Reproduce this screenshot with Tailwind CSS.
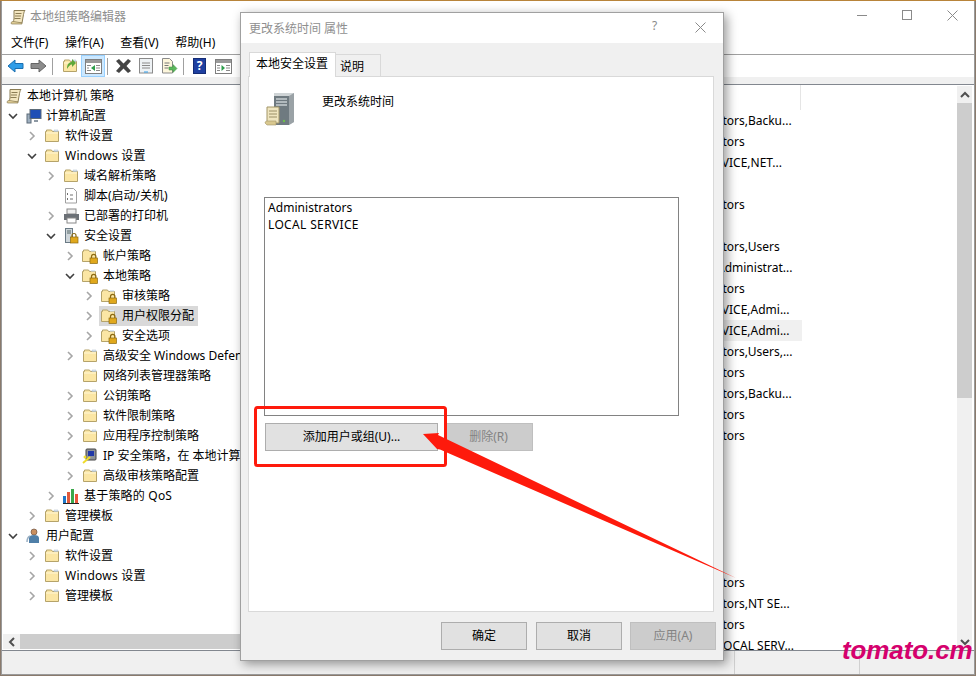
<!DOCTYPE html>
<html>
<head>
<meta charset="utf-8">
<script src="https://cdn.jsdelivr.net/npm/@tailwindcss/browser@4"></script>
</head>
<body class="w-[976px] h-[676px] overflow-hidden relative bg-[#8a7a6c] font-['Noto_Sans','Noto_Sans_CJK_SC',sans-serif] text-[12px] text-black">
<svg width="0" height="0" class="absolute">
  <defs>
    <symbol id="open" viewBox="0 0 12 12"><path d="M4 2l4 4-4 4" fill="none" stroke="#a6a6a6" stroke-width="1.6"/></symbol>
    <symbol id="down" viewBox="0 0 12 12"><path d="M2 4l4 4 4-4" fill="none" stroke="#404040" stroke-width="1.6"/></symbol>
    <symbol id="folder" viewBox="0 0 16 16"><path d="M1.500 13.500V3.500h1V2h5l1 1.500h6v10z" fill="#fbe6a4" stroke="#b5a36a"/><path d="M2 5h12" stroke="#fff6d6"/><path d="M10 2h4v1.500h-4z" fill="#dce9f5" stroke="#a8b8c8" stroke-width=".5"/></symbol>
    <symbol id="lockfolder" viewBox="0 0 16 16"><path d="M.5 13.500V3.500h1V2h5l1 1.500h6v10z" fill="#fbe6a4" stroke="#b5a36a"/><path d="M9 2h4v1.500H9z" fill="#dce9f5"/><path d="M9.500 10V8.500a2.200 2.200 0 0 1 4.400 0V10" fill="none" stroke="#8c6a12" stroke-width="1.200"/><rect x="8" y="10" width="7.500" height="5.500" fill="#e0a81c" stroke="#8c6a12" stroke-width=".7"/></symbol>
    <symbol id="scroll" viewBox="0 0 16 16"><path d="M4 1.500h11c-1 1-1 2-1.500 4L12 14H2c1-.5 1.500-1.500 2-4z" fill="#f3e6c0" stroke="#8b7d55"/><path d="M5.500 4.500h6M5 7h6M4.500 9.500h6" stroke="#8b7d55"/><path d="M1 14.500c0-2 1.500-2 3-2l8 1.500v1H2z" fill="#e2cf98" stroke="#8b7d55" stroke-width=".7"/></symbol>
  </defs>
</svg>
<div class="absolute left-0 right-0 top-0 h-px bg-[#b8843a]"></div>

<!-- main window -->
<div class="absolute left-px top-px w-[974px] h-[674px] bg-white border-x border-b border-[#9a9a9a] flex flex-col overflow-hidden">
  <div class="h-[31px] flex items-center relative shrink-0">
    <svg class="ml-[8px] w-4 h-4"><use href="#scroll"/></svg>
    <span class="ml-[4px] text-[#8f8f8f]">本地组策略编辑器</span>
    <svg class="absolute left-[855px] top-[14px]" width="11" height="2"><path d="M0 .5h10" stroke="#8a8a8a"/></svg>
    <div class="absolute left-[900px] top-[9px] w-[10px] h-[10px] border border-[#8a8a8a]"></div>
    <svg class="absolute left-[945px] top-[9px]" width="11" height="11"><path d="M.5.500l10 10M10.500.500l-10 10" stroke="#8a8a8a"/></svg>
  </div>
  <div class="h-[22px] flex items-center gap-[16.5px] pl-[9px] shrink-0 border-b border-[#a0a0a0] box-content">
    <span>文件(F)</span><span>操作(A)</span><span>查看(V)</span><span>帮助(H)</span>
  </div>
  <div class="h-[22px] flex items-center relative shrink-0">
    <svg class="absolute left-[5px] top-[3px]" width="17" height="16" viewBox="0 0 17 16"><path d="M1 8l7-6v3.500h8v5H8V14z" fill="#2f9de8" stroke="#1b6fb0"/></svg>
    <svg class="absolute left-[28px] top-[3px]" width="17" height="16" viewBox="0 0 17 16"><path d="M16 8L9 2v3.500H1v5h8V14z" fill="#8c8c8c" stroke="#666"/></svg>
    <div class="absolute left-[50px] top-[3px] w-px h-[17px] bg-[#a0a0a0]"></div>
    <svg class="absolute left-[60px] top-[3px] w-4 h-4"><use href="#folder"/></svg>
    <svg class="absolute left-[62px] top-[2px]" width="14" height="13" viewBox="0 0 14 13"><path d="M3 12c0-5 2-7 5-7V2l4 4-4 4V7.500c-2 0-3 1.500-5 4.500z" fill="#5fa83a"/></svg>
    <div class="absolute left-[79px] top-0 w-[24px] h-[22px] bg-[#cce8ff] border border-[#99d1ff]"></div>
    <svg class="absolute left-[83px] top-[4px]" width="17" height="15" viewBox="0 0 17 15"><rect x=".5" y=".5" width="16" height="14" fill="#fff" stroke="#7f7f7f"/><path d="M1 1h15v3H1z" fill="#9a9a9a"/><path d="M11 6.500h4M11 9h4M11 11.500h4M2 6.500h4M2 9h2M2 11.500h4" stroke="#8a8a8a"/><path d="M10 6v6L6 9z" fill="#2e9e4c"/></svg>
    <div class="absolute left-[105px] top-[3px] w-px h-[17px] bg-[#a0a0a0]"></div>
    <svg class="absolute left-[113px] top-[3px]" width="17" height="16" viewBox="0 0 17 16"><path d="M1 3l3-2 4.500 4.500L13 1l3 2-4.500 5 4.500 5-3 2-4.500-4.500L4 15l-3-2 4.500-5z" fill="#444"/></svg>
    <svg class="absolute left-[136px] top-[3px]" width="16" height="16" viewBox="0 0 16 16"><rect x="1.500" y=".5" width="13" height="14.500" fill="#eef2f5" stroke="#8a8a8a"/><path d="M4 5h8M4 7.500h8M4 10h8" stroke="#8a8a8a"/><path d="M6 14h4" stroke="#2f9de8"/></svg>
    <svg class="absolute left-[159px] top-[3px]" width="17" height="16" viewBox="0 0 17 16"><path d="M1.500.5h7l3 3V15h-10z" fill="#fdf6dc" stroke="#8a8a8a"/><path d="M3.500 5h5M3.500 7.500h4M3.500 10h4" stroke="#777"/><path d="M8 9h4V6.500l4 4-4 4V12H8z" fill="#5cb85c" stroke="#3f8f3f" stroke-width=".5"/></svg>
    <div class="absolute left-[181px] top-[3px] w-px h-[17px] bg-[#a0a0a0]"></div>
    <div class="absolute left-[191px] top-[3px] w-[13px] h-[16px] bg-[#1e3fa0] border border-[#142c75] text-white text-[12px] font-bold leading-[14px] text-center">?</div>
    <svg class="absolute left-[213px] top-[4px]" width="17" height="15" viewBox="0 0 17 15"><rect x=".5" y=".5" width="16" height="14" fill="#fff" stroke="#7f7f7f"/><path d="M1 1h15v3H1z" fill="#9a9a9a"/><path d="M2 6.500h3M2 9h3M2 11.500h3M11 6.500h4M11 9h4M11 11.500h4" stroke="#8a8a8a"/><path d="M6.500 6v6l3.500-3z" fill="#2e9e4c"/></svg>
  </div>
  <div class="h-[7px] bg-[#f0f0f0] shrink-0"></div>
  <div class="h-[567px] shrink-0 border-y border-[#82878f] flex">
    <!-- tree -->
    <div class="w-[400px] shrink-0 flex flex-col pl-px">
      <div class="flex-1 overflow-hidden whitespace-nowrap pt-px">
        <div class="h-5 flex items-center pl-[3px] gap-[5px]"><svg class="w-4 h-4"><use href="#scroll"/></svg><span>本地计算机 策略</span></div>
        <div class="h-5 flex items-center pl-[4px]"><svg class="w-3 h-3"><use href="#down"/></svg>
          <svg class="ml-[7px] w-4 h-4" viewBox="0 0 16 16"><rect x="1" y="6" width="4" height="9" fill="#9fb0c0" stroke="#5c6b78"/><rect x="4" y="1.500" width="11" height="9" fill="#1f4fb5" stroke="#5c6b78"/><path d="M8 12h4v2H8z" fill="#8d98a3"/></svg>
          <span class="ml-[4px]">计算机配置</span></div>
        <div class="h-5 flex items-center pl-[23px]"><svg class="w-3 h-3"><use href="#open"/></svg><svg class="ml-[6px] w-4 h-4"><use href="#folder"/></svg><span class="ml-[5px]">软件设置</span></div>
        <div class="h-5 flex items-center pl-[23px]"><svg class="w-3 h-3"><use href="#down"/></svg><svg class="ml-[6px] w-4 h-4"><use href="#folder"/></svg><span class="ml-[5px] tracking-[0.25px]">Windows 设置</span></div>
        <div class="h-5 flex items-center pl-[42px]"><svg class="w-3 h-3"><use href="#open"/></svg><svg class="ml-[6px] w-4 h-4"><use href="#folder"/></svg><span class="ml-[5px]">域名解析策略</span></div>
        <div class="h-5 flex items-center pl-[60px]"><svg class="w-4 h-4" viewBox="0 0 16 16"><path d="M2.500.5h8l3 3V15h-11z" fill="#fff" stroke="#a0a0a0"/><path d="M5 5l-1 1 1 1M7 7h3M5 10l-1 1 1 1M7 11h3" fill="none" stroke="#707070"/></svg><span class="ml-[5px]">脚本(启动/关机)</span></div>
        <div class="h-5 flex items-center pl-[42px]"><svg class="w-3 h-3"><use href="#open"/></svg><svg class="ml-[6px] w-[17px] h-4" viewBox="0 0 17 16"><rect x="4" y="1" width="9" height="5" fill="#eee" stroke="#888"/><rect x="1" y="6" width="15" height="6" fill="#6b7076"/><rect x="4" y="10" width="9" height="5" fill="#fff" stroke="#888"/></svg><span class="ml-[4px]">已部署的打印机</span></div>
        <div class="h-5 flex items-center pl-[42px]"><svg class="w-3 h-3"><use href="#down"/></svg><svg class="ml-[6px] w-4 h-4" viewBox="0 0 16 16"><rect x="2.500" y=".5" width="7" height="14" fill="#cfd6da" stroke="#6a7a85"/><path d="M4 3h4M4 5h4" stroke="#566"/><path d="M9 9V7.500a2 2 0 0 1 4 0V9" fill="none" stroke="#8c6a12" stroke-width="1.200"/><rect x="7.500" y="9" width="7.500" height="6" fill="#e0a81c" stroke="#8c6a12" stroke-width=".7"/></svg><span class="ml-[5px]">安全设置</span></div>
        <div class="h-5 flex items-center pl-[61px]"><svg class="w-3 h-3"><use href="#open"/></svg><svg class="ml-[6px] w-4 h-4"><use href="#lockfolder"/></svg><span class="ml-[5px]">帐户策略</span></div>
        <div class="h-5 flex items-center pl-[61px]"><svg class="w-3 h-3"><use href="#down"/></svg><svg class="ml-[6px] w-4 h-4"><use href="#lockfolder"/></svg><span class="ml-[5px]">本地策略</span></div>
        <div class="h-5 flex items-center pl-[80px]"><svg class="w-3 h-3"><use href="#open"/></svg><svg class="ml-[6px] w-4 h-4"><use href="#lockfolder"/></svg><span class="ml-[5px]">审核策略</span></div>
        <div class="h-5 flex items-center pl-[80px]"><svg class="w-3 h-3"><use href="#open"/></svg><div class="ml-[4px] w-[99px] h-5 bg-[#d9d9d9] flex items-center pl-[2px]"><svg class="w-4 h-4"><use href="#lockfolder"/></svg><span class="ml-[5px]">用户权限分配</span></div></div>
        <div class="h-5 flex items-center pl-[80px]"><svg class="w-3 h-3"><use href="#open"/></svg><svg class="ml-[6px] w-4 h-4"><use href="#lockfolder"/></svg><span class="ml-[5px]">安全选项</span></div>
        <div class="h-5 flex items-center pl-[61px]"><svg class="w-3 h-3"><use href="#open"/></svg><svg class="ml-[6px] w-4 h-4"><use href="#folder"/></svg><span class="ml-[5px]">高级安全 Windows Defender 防火墙</span></div>
        <div class="h-5 flex items-center pl-[79px]"><svg class="w-4 h-4"><use href="#folder"/></svg><span class="ml-[5px]">网络列表管理器策略</span></div>
        <div class="h-5 flex items-center pl-[61px]"><svg class="w-3 h-3"><use href="#open"/></svg><svg class="ml-[6px] w-4 h-4"><use href="#folder"/></svg><span class="ml-[5px]">公钥策略</span></div>
        <div class="h-5 flex items-center pl-[61px]"><svg class="w-3 h-3"><use href="#open"/></svg><svg class="ml-[6px] w-4 h-4"><use href="#folder"/></svg><span class="ml-[5px]">软件限制策略</span></div>
        <div class="h-5 flex items-center pl-[61px]"><svg class="w-3 h-3"><use href="#open"/></svg><svg class="ml-[6px] w-4 h-4"><use href="#folder"/></svg><span class="ml-[5px]">应用程序控制策略</span></div>
        <div class="h-5 flex items-center pl-[61px]"><svg class="w-3 h-3"><use href="#open"/></svg><svg class="ml-[6px] w-4 h-4" viewBox="0 0 16 16"><rect x="4" y="1" width="10" height="11" rx="1" fill="#8d9299" stroke="#444"/><rect x="6" y="3" width="6" height="5" fill="#2038a8"/><path d="M1 15l7-6" stroke="#f0dc2a" stroke-width="2"/><circle cx="3" cy="9" r="1.500" fill="#f0dc2a"/></svg><span class="ml-[5px]">IP 安全策略，在 本地计算机</span></div>
        <div class="h-5 flex items-center pl-[61px]"><svg class="w-3 h-3"><use href="#open"/></svg><svg class="ml-[6px] w-4 h-4"><use href="#folder"/></svg><span class="ml-[5px]">高级审核策略配置</span></div>
        <div class="h-5 flex items-center pl-[42px]"><svg class="w-3 h-3"><use href="#open"/></svg><svg class="ml-[6px] w-4 h-4" viewBox="0 0 16 16"><rect x="0" y="8" width="3" height="7" fill="#1f78c8"/><rect x="4" y="4" width="3" height="11" fill="#e05a3c"/><rect x="8" y="1" width="3" height="14" fill="#39a84a"/><rect x="12" y="6" width="3" height="9" fill="#e8563c"/><path d="M0 15.500h16" stroke="#222"/></svg><span class="ml-[5px] tracking-[0.2px]">基于策略的 QoS</span></div>
        <div class="h-5 flex items-center pl-[23px]"><svg class="w-3 h-3"><use href="#open"/></svg><svg class="ml-[6px] w-4 h-4"><use href="#folder"/></svg><span class="ml-[5px]">管理模板</span></div>
        <div class="h-5 flex items-center pl-[4px]"><svg class="w-3 h-3"><use href="#down"/></svg><svg class="ml-[7px] w-4 h-4" viewBox="0 0 16 16"><circle cx="8" cy="4" r="3" fill="#c98f5f" stroke="#6d5240" stroke-width=".7"/><path d="M3 15V10c0-2 2-3 5-3s5 1 5 3v5z" fill="#4f7fa8"/><path d="M1 14c0-3 1-5 3-6" fill="none" stroke="#9ab0c4" stroke-width="1.500"/></svg><span class="ml-[4px]">用户配置</span></div>
        <div class="h-5 flex items-center pl-[23px]"><svg class="w-3 h-3"><use href="#open"/></svg><svg class="ml-[6px] w-4 h-4"><use href="#folder"/></svg><span class="ml-[5px]">软件设置</span></div>
        <div class="h-5 flex items-center pl-[23px]"><svg class="w-3 h-3"><use href="#open"/></svg><svg class="ml-[6px] w-4 h-4"><use href="#folder"/></svg><span class="ml-[5px] tracking-[0.25px]">Windows 设置</span></div>
        <div class="h-5 flex items-center pl-[23px]"><svg class="w-3 h-3"><use href="#open"/></svg><svg class="ml-[6px] w-4 h-4"><use href="#folder"/></svg><span class="ml-[5px]">管理模板</span></div>
      </div>
      <div class="h-[15px] shrink-0 mb-px flex bg-[#cdcdcd]">
        <div class="w-[17px] bg-[#f0f0f0] flex items-center justify-center"><svg width="8" height="10"><path d="M6 1L2 5l4 4" fill="none" stroke="#505050" stroke-width="2"/></svg></div>
      </div>
    </div>
    <!-- list -->
    <div class="flex-1 flex min-w-0">
      <div class="flex-1 overflow-hidden whitespace-nowrap leading-[21px]">
        <div class="h-[25px] w-[399px] border-r border-[#e5e5e5]"></div>
        <div class="w-[400px] h-[21px] pl-[259px]">Administrators,Backu...</div>
        <div class="w-[400px] h-[21px] pl-[259px]">Administrators</div>
        <div class="w-[400px] h-[21px] pl-[259px]">LOCAL SERVICE,NET...</div>
        <div class="w-[400px] h-[21px] pl-[259px]"></div>
        <div class="w-[400px] h-[21px] pl-[259px]">Administrators</div>
        <div class="w-[400px] h-[21px] pl-[259px]"></div>
        <div class="w-[400px] h-[21px] pl-[259px]">Administrators,Users</div>
        <div class="w-[400px] h-[21px] pl-[315px]">Administrat...</div>
        <div class="w-[400px] h-[21px] pl-[259px]">Administrators</div>
        <div class="w-[400px] h-[21px] pl-[259px]">LOCAL SERVICE,Admi...</div>
        <div class="w-[400px] h-[21px] pl-[259px] bg-[#f0f0f0]">LOCAL SERVICE,Admi...</div>
        <div class="w-[400px] h-[21px] pl-[259px]">Administrators,Users,...</div>
        <div class="w-[400px] h-[21px] pl-[259px]">Administrators</div>
        <div class="w-[400px] h-[21px] pl-[259px]">Administrators,Backu...</div>
        <div class="w-[400px] h-[21px] pl-[259px]">Administrators</div>
        <div class="w-[400px] h-[21px] pl-[259px]">Administrators</div>
        <div class="h-[126px]"></div>
        <div class="w-[400px] h-[21px] pl-[259px]">Administrators</div>
        <div class="w-[400px] h-[21px] pl-[259px]">Administrators,NT SE...</div>
        <div class="w-[400px] h-[21px] pl-[259px]">Administrators</div>
        <div class="w-[400px] h-[21px] pl-[315px]">LOCAL SERV...</div>
      </div>
      <div class="w-[15px] shrink-0 mr-[2px] mt-px bg-[#f0f0f0] flex flex-col">
        <div class="h-[17px] flex items-center justify-center"><svg width="10" height="8"><path d="M1 6l4-4 4 4" fill="none" stroke="#505050" stroke-width="2"/></svg></div>
        <div class="h-[295px] bg-[#cdcdcd]"></div>
        <div class="flex-1"></div>
        <div class="h-[17px] flex items-center justify-center"><svg width="10" height="8"><path d="M1 2l4 4 4-4" fill="none" stroke="#505050" stroke-width="2"/></svg></div>
      </div>
    </div>
  </div>
  <div class="flex-1 bg-[#f0f0f0] flex">
    <div class="w-[733px] border-r border-[#d0d0d0]"></div>
    <div class="w-[125px] border-r border-[#d0d0d0]"></div>
  </div>
</div>

<!-- dialog -->
<div class="absolute left-[240px] top-[12px] w-[484px] h-[649px] bg-[#f0f0f0] border border-[#a0a0a0] shadow-[3px_3px_10px_rgba(0,0,0,0.4)] flex flex-col">
  <div class="h-[30px] bg-white flex items-center relative shrink-0">
    <span class="ml-[8px] mt-px text-[#8f8f8f]">更改系统时间 属性</span>
    <span class="absolute left-[411px] top-[4px] text-[#8a8a8a]">?</span>
    <svg class="absolute left-[454px] top-[9px]" width="11" height="11"><path d="M.5.500l10 10M10.500.500l-10 10" stroke="#8a8a8a"/></svg>
  </div>
  <div class="px-[7px] pt-[9px] flex-1 flex flex-col">
    <div class="flex items-end h-[25px] pl-px relative z-10 -mb-px">
      <div class="w-[87px] h-[25px] bg-white border border-b-0 border-[#d9d9d9] pl-[6px] leading-[22px]">本地安全设置</div>
      <div class="w-[45px] h-[23px] bg-[#f0f0f0] border border-l-0 border-[#d9d9d9] pl-[4px] leading-[23px]">说明</div>
    </div>
    <div class="h-[536px] w-[466px] bg-white border border-[#d9d9d9] px-[15px] pt-[15px]">
      <div class="flex h-[105px]">
        <svg width="32" height="34" viewBox="0 0 32 34" class="shrink-0"><path d="M10 1h20v29l-5 3H10z" fill="#cfd4d6"/><path d="M25 4l5-3v29l-5 3z" fill="#9aa2a6"/><path d="M10 4h15v29H10z" fill="#6f7a80"/><path d="M12 7h11M12 10h11M12 13h11" stroke="#c8ced1" stroke-width="1.500"/><circle cx="20" cy="29" r="1.200" fill="#6cc04a"/><path d="M3 15h12v16H3z" fill="#efe5bf" stroke="#a39668"/><path d="M5 19h8M5 22h8M5 25h8" stroke="#9a8f66"/><path d="M1 31c0-2 2-2 3-2h8v4H3z" fill="#d9c88f" stroke="#a39668" stroke-width=".6"/></svg>
        <span class="ml-[26px] mt-px">更改系统时间</span>
      </div>
      <div class="h-[219px] w-[415px] border border-[#828282] pl-[3px] pt-px leading-[17px]">
        <div class="tracking-[0.05px]">Administrators</div>
        <div class="tracking-[0.35px]">LOCAL SERVICE</div>
      </div>
      <div class="flex mt-[7px] ml-px gap-[6px]">
        <div class="w-[173px] h-[28px] bg-[#e1e1e1] border border-[#adadad] flex items-center justify-center">添加用户或组(U)...</div>
        <div class="w-[89px] h-[28px] bg-[#cccccc] border border-[#bfbfbf] flex items-center justify-center text-[#838383]">删除(R)</div>
      </div>
    </div>
    <div class="flex justify-end mt-[10px]">
      <div class="w-[86px] h-[28px] bg-[#e1e1e1] border border-[#adadad] flex items-center justify-center">确定</div>
      <div class="w-[86px] h-[28px] ml-[9px] bg-[#e1e1e1] border border-[#adadad] flex items-center justify-center">取消</div>
      <div class="w-[86px] h-[28px] ml-[8px] bg-[#cccccc] border border-[#bfbfbf] flex items-center justify-center text-[#838383]">应用(A)</div>
    </div>
  </div>
</div>

<!-- annotation -->
<svg class="absolute left-0 top-0 pointer-events-none" width="976" height="676">
  <rect x="255.500" y="407.500" width="190" height="58" rx="2" fill="none" stroke="#fe1a0c" stroke-width="3"/>
  <path d="M423 434L439 433L438 435L736 578L440 449.500L437 449z" fill="#fe1a0c"/>
</svg>
<div class="absolute left-[842px] top-[631px] font-['Liberation_Sans',sans-serif] font-bold italic text-[26px] leading-[38px] text-[#d5006d] tracking-[-0.1px]">tomato.cm</div>
</body>
</html>
